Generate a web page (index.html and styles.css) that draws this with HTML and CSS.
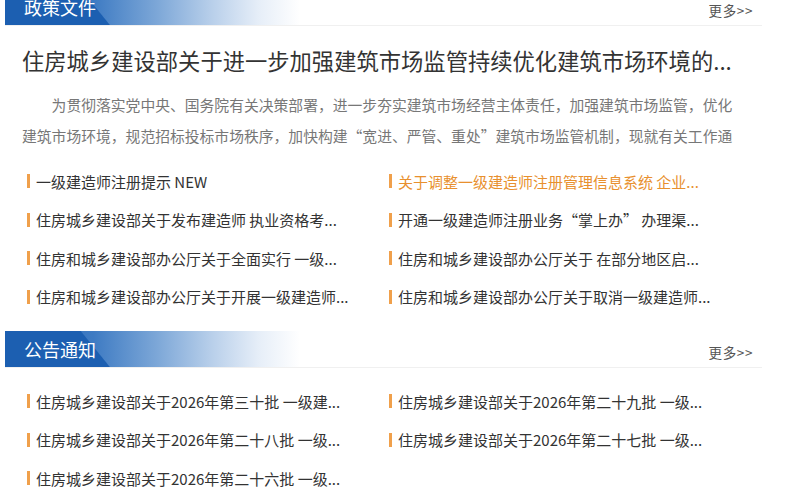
FILE: index.html
```html
<!DOCTYPE html>
<html lang="zh-CN">
<head>
<meta charset="utf-8">
<link rel="stylesheet" href="styles.css">
</head>
<body>
<div class="page">
  <section class="block block-first">
    <div class="head">
      <div class="tab">政策文件</div>
      <a class="more">更多&gt;&gt;</a>
    </div>
    <div class="body">
      <h1 class="headline">住房城乡建设部关于进一步加强建筑市场监管持续优化建筑市场环境的...</h1>
      <p class="summary">为贯彻落实党中央、国务院有关决策部署，进一步夯实建筑市场经营主体责任，加强建筑市场监管，优化建筑市场环境，规范招标投标市场秩序，加快构建“宽进、严管、重处”建筑市场监管机制，现就有关工作通</p>
      <ul class="list">
        <li><span class="mark"></span>一级建造师注册提示 NEW</li>
        <li class="hot"><span class="mark"></span>关于调整一级建造师注册管理信息系统 企业...</li>
        <li><span class="mark"></span>住房城乡建设部关于发布建造师 执业资格考...</li>
        <li><span class="mark"></span>开通一级建造师注册业务“掌上办” 办理渠...</li>
        <li><span class="mark"></span>住房和城乡建设部办公厅关于全面实行 一级...</li>
        <li><span class="mark"></span>住房和城乡建设部办公厅关于 在部分地区启...</li>
        <li><span class="mark"></span>住房和城乡建设部办公厅关于开展一级建造师...</li>
        <li><span class="mark"></span>住房和城乡建设部办公厅关于取消一级建造师...</li>
      </ul>
    </div>
  </section>
  <section class="block block-second">
    <div class="head">
      <div class="tab">公告通知</div>
      <a class="more">更多&gt;&gt;</a>
    </div>
    <div class="body">
      <ul class="list list-notice">
        <li><span class="mark"></span>住房城乡建设部关于2026年第三十批 一级建...</li>
        <li><span class="mark"></span>住房城乡建设部关于2026年第二十九批 一级...</li>
        <li><span class="mark"></span>住房城乡建设部关于2026年第二十八批 一级...</li>
        <li><span class="mark"></span>住房城乡建设部关于2026年第二十七批 一级...</li>
        <li><span class="mark"></span>住房城乡建设部关于2026年第二十六批 一级...</li>
      </ul>
    </div>
  </section>
</div>
</body>
</html>
```
FILE: styles.css
```css
* { box-sizing: border-box; }
html, body { margin: 0; padding: 0; background: #fff; }
body {
  font-family: "Noto Sans CJK SC", "Noto Sans", "Liberation Sans", sans-serif;
  color: #333;
  overflow: hidden;
}
.page {
  width: 757px;
  margin: -11px 0 0 5px;
}
.head {
  display: flex;
  justify-content: space-between;
  align-items: center;
  height: 37px;
  border-bottom: 1px solid #f0f0f0;
}
.tab {
  width: 295px;
  height: 36px;
  padding-left: 19px;
  display: flex;
  align-items: center;
  color: #fff;
  font-size: 18px;
  background:
    linear-gradient(51deg, #1c5fb1 81px, rgba(28,95,177,0) 82px),
    linear-gradient(to right, #2a6ab8 0, #3e7bc3 30%, #7ea8d8 52%, #b8cfea 70%, #e6eef8 86%, #ffffff 100%);
}
.more {
  font-size: 13.5px;
  color: #555;
  margin-right: 9px;
  padding-top: 6px;
  letter-spacing: 0.6px;
}
.body { padding: 0 17px; }
.headline {
  margin: 19px 0 0;
  font-size: 22.3px;
  font-weight: normal;
  line-height: 30px;
  color: #333;
  white-space: nowrap;
}
.summary {
  margin: 14px 0 0;
  width: 711px;
  font-size: 14.8px;
  line-height: 31px;
  height: 62px;
  text-indent: 2em;
  color: #777;
}
.list {
  list-style: none;
  margin: 11px 0 0;
  padding: 0;
  display: grid;
  grid-template-columns: 362px 1fr;
  grid-auto-rows: 38.5px;
}
.list li {
  display: flex;
  align-items: center;
  font-size: 15px;
  color: #333;
  white-space: nowrap;
  padding-left: 5px;
}
.list li.hot { color: #e8902e; }
.mark {
  width: 3px;
  height: 14px;
  background: #f0a04b;
  margin-right: 6px;
  flex: none;
}
.block-second { margin-top: 15px; }
.list-notice { margin-top: 14px; }
```
